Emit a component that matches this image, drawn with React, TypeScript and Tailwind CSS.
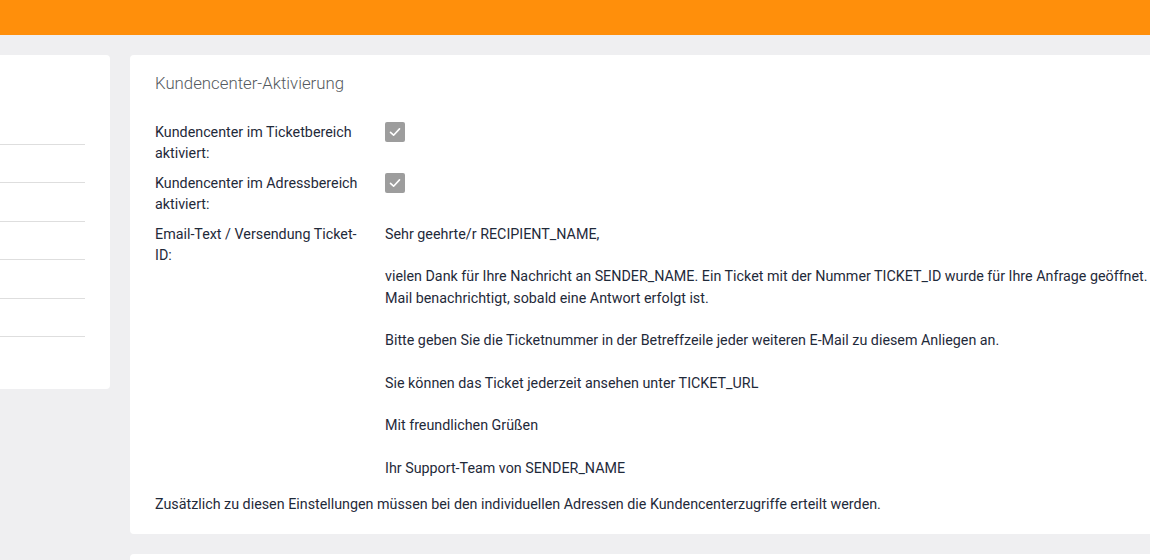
import React from "react";

function Check() {
  return (
    <div className="w-5 h-5 rounded-[2px] bg-[#9d9d9d] flex items-center justify-center shrink-0">
      <svg width="14" height="14" viewBox="0 0 14 14" fill="none">
        <path d="M2.5 7.3 L5.6 10.2 L11.5 3.9" stroke="#ffffff" strokeWidth="1.6" strokeLinecap="round" strokeLinejoin="round" />
      </svg>
    </div>
  );
}

export default function App() {
  const lines: (string | null)[] = [
    "Sehr geehrte/r RECIPIENT_NAME,",
    null,
    "vielen Dank für Ihre Nachricht an SENDER_NAME. Ein Ticket mit der Nummer TICKET_ID wurde für Ihre Anfrage geöffnet. Sie werden per E-",
    "Mail benachrichtigt, sobald eine Antwort erfolgt ist.",
    null,
    "Bitte geben Sie die Ticketnummer in der Betreffzeile jeder weiteren E-Mail zu diesem Anliegen an.",
    null,
    "Sie können das Ticket jederzeit ansehen unter TICKET_URL",
    null,
    "Mit freundlichen Grüßen",
    null,
    "Ihr Support-Team von SENDER_NAME",
  ];
  return (
    <div
      className="w-[1150px] h-[560px] overflow-hidden bg-[#efeff1] text-[#1f2a3a]"
      style={{ fontFamily: "Roboto, 'Noto Sans', Arial, sans-serif" }}
    >
      <div className="h-[35px] bg-[#ff8f0b]" />
      <div className="flex gap-5 pt-5">
        <div className="-ml-[120px] w-[230px] shrink-0 flex flex-col gap-5">
          <div className="h-[334px] bg-white rounded-[4px] pr-[25px] pt-[89px]">
            {[0, 1, 2, 3, 4, 5].map((i) => (
              <div key={i} className={"border-t border-[#dedede] " + (i === 5 ? "h-0" : "h-[38.4px]")} />
            ))}
          </div>
        </div>
        <div className="w-[1150px] shrink-0 flex flex-col gap-5">
          <div className="bg-white rounded-[4px] pl-[25px] pt-[15.5px] pb-[18px]">
            <div className="text-[16.8px] leading-6 font-light text-[#555a60]">Kundencenter-Aktivierung</div>
            <div className="mt-[27px] flex flex-col gap-[8.5px] text-[14.3px] leading-[21.3px]">
              <div className="flex">
                <div className="w-[230px] pr-[20px] shrink-0">Kundencenter im Ticketbereich aktiviert:</div>
                <Check />
              </div>
              <div className="flex">
                <div className="w-[230px] pr-[20px] shrink-0">Kundencenter im Adressbereich aktiviert:</div>
                <Check />
              </div>
              <div className="flex">
                <div className="w-[230px] pr-[20px] shrink-0">Email-Text / Versendung Ticket-ID:</div>
                <div className="whitespace-nowrap">
                  {lines.map((l, i) => (
                    <div key={i} className="h-[21.3px]">{l ?? "\u00a0"}</div>
                  ))}
                </div>
              </div>
            </div>
            <div className="mt-[15px] text-[14.3px] leading-[21.3px]">
              Zusätzlich zu diesen Einstellungen müssen bei den individuellen Adressen die Kundencenterzugriffe erteilt werden.
            </div>
          </div>
          <div className="h-[100px] bg-white rounded-[4px]" />
        </div>
      </div>
    </div>
  );
}
